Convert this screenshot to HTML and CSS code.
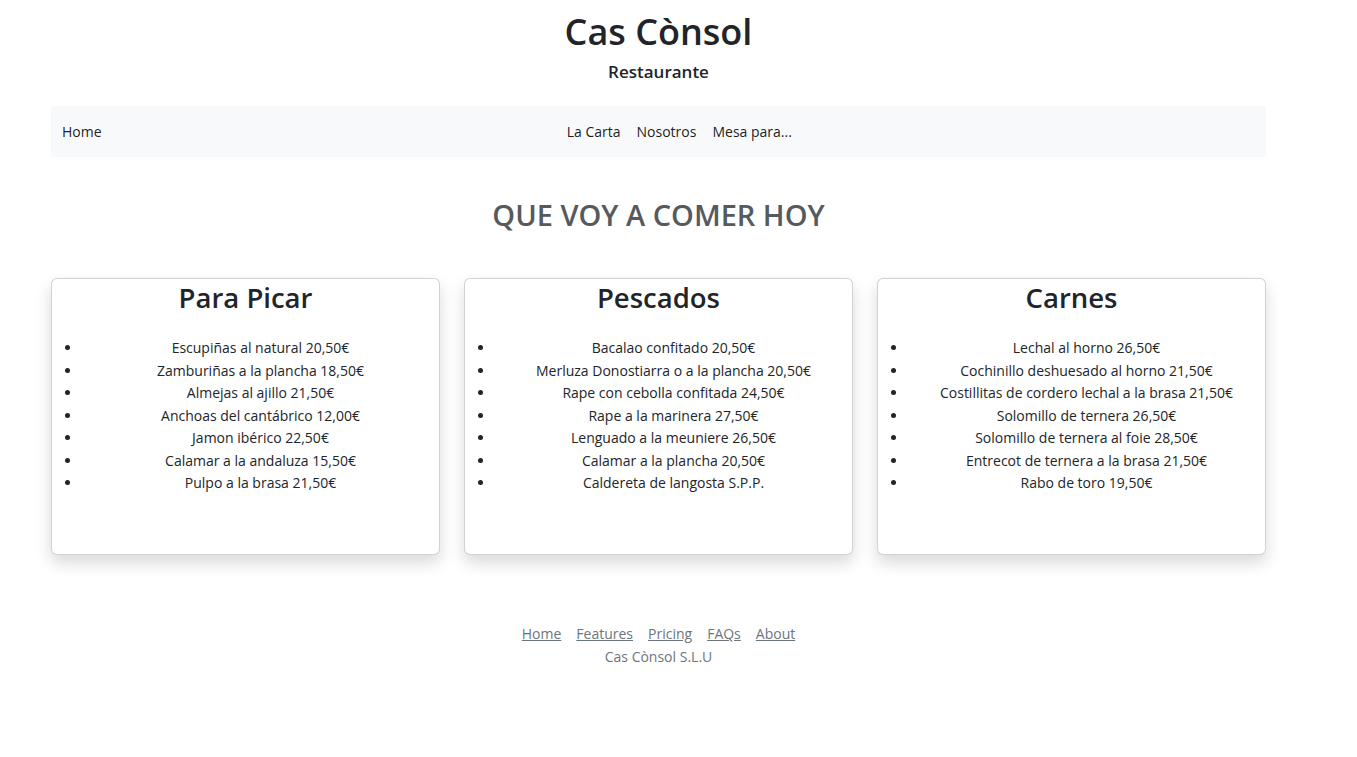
FILE: index.html
```html
<!DOCTYPE html>
<html lang="es">
<head>
<meta charset="utf-8">
<title>Cas Cònsol</title>
<link rel="stylesheet" href="styles.css">
</head>
<body>
<div class="container">
  <header class="site-header">
    <h1 class="brand-title">Cas Cònsol</h1>
    <p class="brand-sub">Restaurante</p>
  </header>
  <nav class="navbar">
    <a class="nav-brand" href="#">Home</a>
    <div class="nav-links">
      <a href="#">La Carta</a>
      <a href="#">Nosotros</a>
      <a href="#">Mesa para...</a>
    </div>
  </nav>
  <h2 class="section-title">QUE VOY A COMER HOY</h2>
  <div class="cards">
    <div class="card">
      <h3 class="card-title">Para Picar</h3>
      <ul class="menu-list">
        <li>Escupiñas al natural 20,50€</li>
        <li>Zamburiñas a la plancha 18,50€</li>
        <li>Almejas al ajillo 21,50€</li>
        <li>Anchoas del cantábrico 12,00€</li>
        <li>Jamon ibérico 22,50€</li>
        <li>Calamar a la andaluza 15,50€</li>
        <li>Pulpo a la brasa 21,50€</li>
      </ul>
    </div>
    <div class="card">
      <h3 class="card-title">Pescados</h3>
      <ul class="menu-list">
        <li>Bacalao confitado 20,50€</li>
        <li>Merluza Donostiarra o a la plancha 20,50€</li>
        <li>Rape con cebolla confitada 24,50€</li>
        <li>Rape a la marinera 27,50€</li>
        <li>Lenguado a la meuniere 26,50€</li>
        <li>Calamar a la plancha 20,50€</li>
        <li>Caldereta de langosta S.P.P.</li>
      </ul>
    </div>
    <div class="card">
      <h3 class="card-title">Carnes</h3>
      <ul class="menu-list">
        <li>Lechal al horno 26,50€</li>
        <li>Cochinillo deshuesado al horno 21,50€</li>
        <li>Costillitas de cordero lechal a la brasa 21,50€</li>
        <li>Solomillo de ternera 26,50€</li>
        <li>Solomillo de ternera al foie 28,50€</li>
        <li>Entrecot de ternera a la brasa 21,50€</li>
        <li>Rabo de toro 19,50€</li>
      </ul>
    </div>
  </div>
  <footer class="footer">
    <nav class="footer-links">
      <a href="#">Home</a>
      <a href="#">Features</a>
      <a href="#">Pricing</a>
      <a href="#">FAQs</a>
      <a href="#">About</a>
    </nav>
    <p class="copyright">Cas Cònsol S.L.U</p>
  </footer>
</div>
</body>
</html>
```
FILE: styles.css
```css
* { box-sizing: border-box; }
html, body { margin: 0; padding: 0; }
body {
  font-family: "Open Sans", "Noto Sans", sans-serif;
  font-size: 14px;
  line-height: 22.5px;
  color: #212529;
  background: #fff;
}
a { color: inherit; text-decoration: none; }
.container {
  width: 1215px;
  margin-left: 51px;
}
.site-header {
  text-align: center;
  padding-top: 8px;
}
.brand-title {
  margin: 0;
  font-size: 36px;
  line-height: 48px;
  font-weight: 600;
}
.brand-sub {
  margin: 5px 0 0;
  font-size: 17px;
  line-height: 22px;
  font-weight: 600;
}
.navbar {
  margin-top: 23px;
  height: 51px;
  background: #f8f9fa;
  display: flex;
  align-items: center;
  padding: 2px 11px 0;
}
.nav-brand { color: rgba(0,0,0,.9); }
.nav-links {
  flex: 1;
  display: flex;
  justify-content: center;
  gap: 16px;
  padding-left: 2px;
}
.nav-links a { color: rgba(0,0,0,.9); }
.section-title {
  margin: 0;
  padding-top: 40px;
  text-align: center;
  font-size: 29px;
  line-height: 36px;
  font-weight: 600;
  color: #555a5f;
}
.cards {
  margin-top: 45px;
  display: flex;
  gap: 24px;
}
.card {
  flex: 1;
  height: 277px;
  border: 1px solid rgba(0,0,0,.175);
  border-radius: 6px;
  box-shadow: 0 8px 16px rgba(0,0,0,.15);
  text-align: center;
  background: #fff;
}
.card-title {
  margin: 1px 0 0;
  font-size: 27.5px;
  line-height: 36px;
  font-weight: 600;
}
.menu-list {
  margin: 21px 0 0;
  padding: 0 0 0 30px;
}
.footer {
  margin-top: 68px;
  text-align: center;
  color: #6c757d;
}
.footer-links {
  display: flex;
  justify-content: center;
  gap: 15px;
}
.footer-links a {
  text-decoration: underline;
  color: #6c757d;
}
.copyright { margin: 0; }
```
